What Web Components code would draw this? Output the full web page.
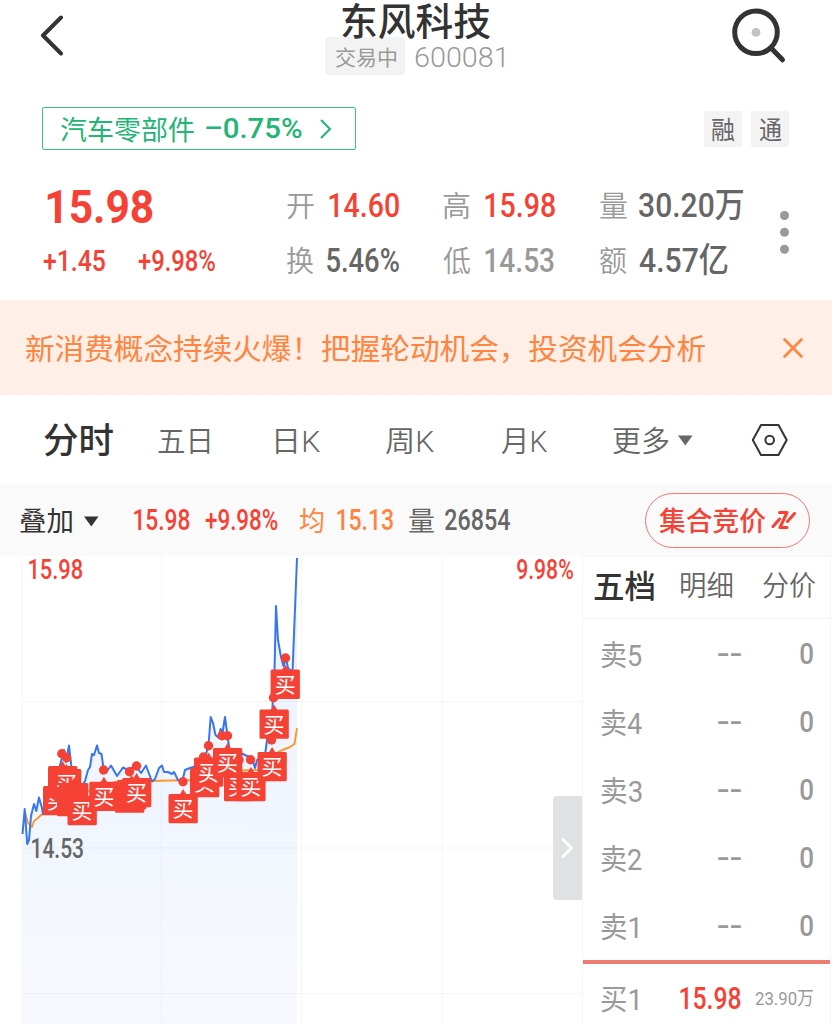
<!DOCTYPE html>
<html lang="zh-CN">
<head>
<meta charset="utf-8">
<title>东风科技 600081</title>
<style>
  body {
    margin: 0;
    background: #fff;
    overflow: hidden;
  }
</style>
</head>
<body>
<stock-page></stock-page>

<script>
const FONT = 'Roboto, "Noto Sans CJK SC", sans-serif';
const pen = document.createElement("canvas").getContext("2d");

// Text squeezed or stretched so its ink fills exactly `w` pixels
class FitText extends HTMLElement {
  constructor() {
    super();
    this.attachShadow({ mode: "open" });
    this.shadowRoot.innerHTML = `
      <style>
        :host {
          display: block;
          flex: none;
        }

        span {
          display: block;
          width: max-content;
          white-space: pre;
          transform-origin: 0 50%;
        }
      </style>
      <span><slot></slot></span>
    `;
  }

  connectedCallback() {
    const text = this.textContent;
    const w = Number(this.getAttribute("w"));
    const size = Number(this.getAttribute("size") || 28);
    const weight = this.getAttribute("weight") || "400";
    pen.font = `${weight} ${size}px ${FONT}`;
    const m = pen.measureText(text);
    const ink = m.actualBoundingBoxLeft + m.actualBoundingBoxRight;
    // Han glyphs sit a little high next to the digits
    const drop = text.charCodeAt(0) > 0x2e80 ? 1.5 : 0;

    this.style.width = `${w}px`;
    this.style.font = `${weight} ${size}px/${Math.round(size * 1.2)}px ${FONT}`;
    this.style.height = `${Math.round(size * 1.2)}px`;
    this.shadowRoot.querySelector("span").style.transform =
      `translateY(${drop}px) scaleX(${w / ink}) translateX(${m.actualBoundingBoxLeft}px)`;
  }
}

class StockHeader extends HTMLElement {
  constructor() {
    super();
    this.attachShadow({ mode: "open" });
    this.shadowRoot.innerHTML = `
      <style>
        :host {
          display: flex;
          justify-content: space-between;
          align-items: flex-start;
          height: 107px;
          box-sizing: border-box;
          padding: 0 45px 0 40px;
          color: #333;
        }

        .back {
          margin-top: 14px;
        }

        .search {
          margin-top: 8px;
        }

        .middle {
          display: flex;
          flex-direction: column;
          align-items: center;
          padding-left: 32px;
        }

        .middle > fit-text {
          margin: -3px 0 0 3px;
        }

        .code {
          display: flex;
          align-items: center;
          gap: 10px;
          margin-top: -6px;
          color: #999;
        }

        .code > fit-text {
          margin-top: 3px;
        }

        .badge {
          display: flex;
          align-items: center;
          justify-content: center;
          width: 80px;
          height: 38px;
          border-radius: 4px;
          background: #f3f3f3;
        }
      </style>
      <svg class="back" width="26" height="42" fill="none" stroke="currentColor" stroke-width="4" stroke-linecap="round" stroke-linejoin="round">
        <path d="M21 3.5 3 21.5l18 18"/>
      </svg>
      <div class="middle">
        <fit-text w="148" size="38" weight="500">东风科技</fit-text>
        <div class="code">
          <div class="badge"><fit-text w="61" size="21">交易中</fit-text></div>
          <fit-text w="89" size="28" weight="300">600081</fit-text>
        </div>
      </div>
      <svg class="search" width="56" height="56" fill="none" stroke="currentColor" stroke-width="5" stroke-linecap="round">
        <circle cx="25" cy="24.3" r="21.3"/>
        <path d="m41 41 10.5 10.8"/>
        <circle cx="25" cy="24.3" r="4.4" fill="#c2c2c2" stroke="none"/>
      </svg>
    `;
  }
}

class SectorRow extends HTMLElement {
  constructor() {
    super();
    this.attachShadow({ mode: "open" });
    this.shadowRoot.innerHTML = `
      <style>
        :host {
          display: flex;
          justify-content: space-between;
          align-items: center;
          height: 43px;
          padding: 0 43px 0 42px;
        }

        .sector {
          display: flex;
          align-items: center;
          box-sizing: border-box;
          width: 314px;
          height: 43px;
          padding-left: 17px;
          border: 1.5px solid #3ac187;
          border-radius: 2px;
          color: #22b573;
        }

        .change {
          margin: 1px 0 0 12px;
        }

        svg {
          margin-left: 17px;
        }

        .tags {
          display: flex;
          gap: 9px;
        }

        .tag {
          display: flex;
          align-items: center;
          justify-content: center;
          width: 38px;
          height: 36px;
          border-radius: 2px;
          background: #f3f3f3;
          color: #666;
        }
      </style>
      <div class="sector">
        <fit-text w="134" size="27">汽车零部件</fit-text>
        <fit-text class="change" w="96" size="28" weight="500">–0.75%</fit-text>
        <svg width="14" height="22" fill="none" stroke="currentColor" stroke-width="2">
          <path d="m2 2 9 9-9 9"/>
        </svg>
      </div>
      <div class="tags">
        <div class="tag"><fit-text w="23" size="25">融</fit-text></div>
        <div class="tag"><fit-text w="23" size="25">通</fit-text></div>
      </div>
    `;
  }
}

class QuoteSummary extends HTMLElement {
  constructor() {
    super();
    this.attachShadow({ mode: "open" });
    this.shadowRoot.innerHTML = `
      <style>
        :host {
          display: flex;
          height: 150px;
          box-sizing: border-box;
          padding: 28px 0 0 43px;
          color: #666;
        }

        .grid {
          display: grid;
          grid-template-columns: 244px 156px 157px 178px;
          grid-template-rows: 55px 55px;
          align-items: center;
        }

        .cell {
          display: flex;
          align-items: center;
        }

        .label, .low {
          color: #999;
        }

        .up {
          color: #f64135;
        }

        .price {
          margin: 3px 0 0 4px;
        }

        .diff {
          gap: 33px;
        }

        .more {
          margin-top: 31px;
        }
      </style>
      <div class="grid">
        <div class="cell up"><fit-text class="price" w="106" size="46" weight="700">15.98</fit-text></div>
        ${this.cell("开", "14.60", 15, 70, "up")}
        ${this.cell("高", "15.98", 15, 70, "up")}
        ${this.cell("量", "30.20万", 12, 104)}
        <div class="cell up diff">
          <fit-text w="62" size="30" weight="500">+1.45</fit-text>
          <fit-text w="77" size="30" weight="500">+9.98%</fit-text>
        </div>
        ${this.cell("换", "5.46%", 13, 72)}
        ${this.cell("低", "14.53", 15, 69, "low")}
        ${this.cell("额", "4.57亿", 12, 89)}
      </div>
      <svg class="more" width="12" height="48" fill="#999">
        <circle cx="6.5" cy="6.5" r="4.5"/>
        <circle cx="6.5" cy="23.3" r="4.5"/>
        <circle cx="6.5" cy="40.2" r="4.5"/>
      </svg>
    `;
  }

  cell(label, value, gap, w, tone = "") {
    return `
      <div class="cell ${tone}" style="gap: ${gap}px">
        <fit-text class="label" w="27" size="29" weight="350">${label}</fit-text>
        <fit-text w="${w}" size="34" weight="500">${value}</fit-text>
      </div>
    `;
  }
}

class NoticeBanner extends HTMLElement {
  constructor() {
    super();
    this.attachShadow({ mode: "open" });
    this.shadowRoot.innerHTML = `
      <style>
        :host {
          display: flex;
          align-items: center;
          justify-content: space-between;
          height: 95px;
          padding: 1px 28px 0 26px;
          box-sizing: border-box;
          background: #ffefe7;
          color: #ff8440;
        }
      </style>
      <fit-text w="679" size="29">新消费概念持续火爆！把握轮动机会，投资机会分析</fit-text>
      <svg width="22" height="22" fill="none" stroke="currentColor" stroke-width="2.6" stroke-linecap="round">
        <path d="m2.5 2.5 17 17m0-17-17 17"/>
      </svg>
    `;
  }
}

class PeriodTabs extends HTMLElement {
  constructor() {
    super();
    this.attachShadow({ mode: "open" });
    this.shadowRoot.innerHTML = `
      <style>
        :host {
          display: flex;
          align-items: center;
          justify-content: space-between;
          height: 89px;
          padding: 1px 44px 0 44px;
          box-sizing: border-box;
          color: #666;
        }

        .tabs, .more {
          display: flex;
          align-items: center;
        }

        .on, svg.gear {
          color: #333;
        }

        .more {
          gap: 9px;
        }
      </style>
      <div class="tabs">
        <fit-text class="on" w="69" size="35" weight="500">分时</fit-text>
        <fit-text style="margin-left: 45px" w="52" size="29" weight="350">五日</fit-text>
        <fit-text style="margin-left: 66px" w="44" size="29" weight="350">日K</fit-text>
        <fit-text style="margin-left: 66px" w="48" size="29" weight="350">周K</fit-text>
        <fit-text style="margin-left: 67px" w="46" size="29" weight="350">月K</fit-text>
        <div class="more" style="margin-left: 66px">
          <fit-text w="56" size="29" weight="350">更多</fit-text>
          <svg width="15" height="11" fill="currentColor"><path d="M0 .5h14.5L7.3 10.5z"/></svg>
        </div>
      </div>
      <svg class="gear" width="37" height="33" fill="none" stroke="currentColor" stroke-width="2" stroke-linejoin="round">
        <path d="M10 1h17.5l8.2 15-8.2 15H10L1.8 16z"/>
        <circle cx="18.7" cy="16" r="4.3"/>
      </svg>
    `;
  }
}

class IndexBar extends HTMLElement {
  constructor() {
    super();
    this.attachShadow({ mode: "open" });
    this.shadowRoot.innerHTML = `
      <style>
        :host {
          display: flex;
          align-items: center;
          height: 72px;
          box-sizing: border-box;
          padding: 0 22px 0 20px;
          background: #fafafa;
          color: #666;
        }

        .overlay {
          color: #333;
        }

        svg.overlay {
          margin: 3px 0 0 12px;
        }

        .up {
          color: #f64135;
        }

        .avg {
          color: #ff8440;
        }

        .auction {
          display: flex;
          align-items: center;
          gap: 5px;
          box-sizing: border-box;
          width: 165px;
          height: 55px;
          margin-left: auto;
          padding-left: 13px;
          border: 1.3px solid #f8776e;
          border-radius: 28px;
          color: #f64135;
        }
      </style>
      <fit-text class="overlay" w="52" size="27">叠加</fit-text>
      <svg class="overlay" width="15" height="11" fill="currentColor"><path d="M0 .5h14.5L7.3 10.5z"/></svg>
      <fit-text class="up" style="margin-left: 35px" w="56" size="29" weight="500">15.98</fit-text>
      <fit-text class="up" style="margin-left: 15px" w="73" size="29" weight="500">+9.98%</fit-text>
      <fit-text class="avg" style="margin-left: 21px" w="25" size="27">均</fit-text>
      <fit-text class="avg" style="margin-left: 13px" w="56" size="29" weight="500">15.13</fit-text>
      <fit-text style="margin-left: 16px" w="25" size="27">量</fit-text>
      <fit-text style="margin-left: 11px" w="65" size="29" weight="500">26854</fit-text>
      <div class="auction">
        <fit-text w="107" size="27" weight="500">集合竞价</fit-text>
        <svg width="26" height="20" fill="none" stroke="currentColor" stroke-width="3" stroke-linecap="round" stroke-linejoin="round">
          <path d="M2 16.5 8.5 9M8.500 2.500H16L9 17.500h7M23.500 3.500 16.500 11.500"/>
        </svg>
      </div>
    `;
  }
}

const PRICE = [
  [22.5, 834], [24.7, 809], [27.2, 844], [29, 840], [31, 816], [34, 804], [36.3, 811], [39, 797.5],
  [42, 808], [43, 814], [47, 795], [55, 785], [60, 765], [64, 750], [66, 762], [69, 745.5],
  [72, 772], [80, 790], [85, 781], [88, 770], [90, 767], [92, 754], [94, 755], [97, 745.5],
  [99, 753], [101.5, 754], [103.5, 768], [107, 771], [111, 765.5], [117, 776], [123, 767.5], [128, 770],
  [136, 766], [141, 773], [146, 765.5], [152, 781.5], [155, 779], [159, 768], [162, 765.5], [164, 772],
  [168, 772], [172, 774], [174, 772], [178, 780], [182, 782], [185, 770], [190, 768], [200, 765],
  [205, 758], [208.5, 745], [210.7, 717], [213, 723], [215.5, 735], [219, 738], [220.5, 729], [222.5, 733],
  [225, 717], [227.5, 736], [231, 760], [238, 764], [242, 753.5], [246, 755.5], [252, 758], [255, 768],
  [257, 760], [265, 755], [267, 740], [272, 715], [274.5, 670], [276, 606], [278, 640], [281, 657],
  [283.5, 666], [286, 658], [288, 668], [292.5, 672], [297, 558]
];

const AVERAGE = [
  [25, 812], [28, 823], [32, 827], [34, 821], [38, 818], [41, 815], [48, 813], [70, 802],
  [95, 787], [118, 781.5], [152, 781], [190, 780], [215, 775], [240, 770.5], [258, 770], [270, 757],
  [280, 751], [290, 747], [294.5, 744], [297, 728]
];

const DOTS = [
  [61.8, 753.8], [66.6, 757.8], [103.6, 770], [129.5, 771.8], [136.5, 766], [183, 781.8],
  [203.5, 757], [208.5, 745.8], [222, 735.8], [227.5, 735.8], [239, 760], [250.5, 759.8],
  [271.5, 740], [273.5, 697.8], [285.5, 658]
];

// Top left corner of every buy flag, back to front; the third item hides the label
const FLAGS = [
  [43, 786], [48, 766, true], [52, 769], [59, 783, true], [57, 787, true],
  [67.5, 796], [115, 783.5], [117, 780, true], [89.3, 781.8], [122, 778], [168.5, 794],
  [190, 768], [194, 757.5], [224, 772], [236.3, 772], [213, 748], [257.5, 752],
  [259.5, 709.5], [270.6, 669.6]
];

class MinuteChart extends HTMLElement {
  constructor() {
    super();
    this.attachShadow({ mode: "open" });
    const price = PRICE.map((p) => p.join()).join(" ");
    const average = AVERAGE.map((p) => p.join()).join(" ");

    this.shadowRoot.innerHTML = `
      <style>
        :host {
          display: block;
          position: relative;
          width: 582px;
          height: 468px;
        }

        svg {
          display: block;
        }

        .top {
          position: absolute;
          inset: -2px 9px auto 29px;
          display: flex;
          justify-content: space-between;
          color: #f64135;
        }

        .open {
          position: absolute;
          left: 32px;
          top: 277px;
          color: #666;
        }

        .fold {
          position: absolute;
          right: 0;
          top: 240px;
          width: 29.5px;
          height: 104px;
          display: flex;
          align-items: center;
          justify-content: center;
          border-radius: 4px 0 0 4px;
          background: #e0e1e3;
        }
      </style>
      <svg width="582" height="468" viewBox="0 556 582 468">
        <defs>
          <linearGradient id="fade" x1="0" y1="556" x2="0" y2="1024" gradientUnits="userSpaceOnUse">
            <stop offset="0" stop-color="#eaf1fd"/>
            <stop offset="1" stop-color="#f7f9fe"/>
          </linearGradient>
        </defs>
        <polygon points="22.5,1024 ${price} 297,1024" fill="url(#fade)"/>
        <path d="M22 556v468M161.5 556v468M301.5 556v468M442.5 556v468M22 701.5h560M22 848h560M22 993.5h560" stroke="#888" stroke-opacity=".08"/>
        <polyline points="${average}" fill="none" stroke="#fb9a2c" stroke-width="1.9" stroke-linejoin="round"/>
        <polyline points="${price}" fill="none" stroke="#3776ee" stroke-width="2" stroke-linejoin="round"/>
        ${DOTS.map(([x, y]) => `<circle cx="${x}" cy="${y}" r="4.7" fill="#f64135"/>`).join("")}
        ${FLAGS.map((f) => this.flag(...f)).join("")}
      </svg>
      <div class="top">
        <fit-text w="53" size="27" weight="500">15.98</fit-text>
        <fit-text w="56" size="27" weight="500">9.98%</fit-text>
      </div>
      <fit-text class="open" w="51" size="27" weight="500">14.53</fit-text>
      <div class="fold">
        <svg width="14" height="22" fill="none" stroke="#fff" stroke-width="3" stroke-linecap="round">
          <path d="m3 2.5 8.5 8.5L3 19.5"/>
        </svg>
      </div>
    `;
  }

  flag(x, y, plain) {
    const label = plain ? "" : `<text x="14.6" y="22.4" text-anchor="middle" font-family='"Noto Sans CJK SC", sans-serif' font-size="21" fill="#fff">买</text>`;
    return `
      <g transform="translate(${x} ${y})">
        <path d="M11 1l3.6-6L18.2 1z" fill="#f64135"/>
        <rect width="29.3" height="29.3" rx="1.5" fill="#f64135"/>
        ${label}
      </g>
    `;
  }
}

class OrderBook extends HTMLElement {
  constructor() {
    super();
    this.attachShadow({ mode: "open" });
    this.shadowRoot.innerHTML = `
      <style>
        :host {
          display: block;
          box-sizing: border-box;
          width: 249px;
          height: 468px;
          border: solid #f5f5f5;
          border-width: 1px 1px 0 1px;
          color: #999;
        }

        .tabs {
          display: flex;
          align-items: center;
          height: 62px;
          box-sizing: border-box;
          padding: 0 0 6px 11px;
          border-bottom: 1px solid #f3f3f3;
          color: #666;
        }

        .on {
          color: #333;
        }

        .row {
          display: flex;
          align-items: center;
          height: 68px;
          padding: 0 17px 0 18px;
        }

        .sells {
          height: 345px;
          box-sizing: border-box;
          padding-top: 1px;
          border-bottom: 4px solid #ec7b72;
        }

        .up {
          color: #f64135;
        }
      </style>
      <div class="tabs">
        <fit-text class="on" w="60" size="32" weight="500">五档</fit-text>
        <fit-text style="margin-left: 27px" w="51" size="28" weight="350">明细</fit-text>
        <fit-text style="margin-left: 31px" w="53" size="28" weight="350">分价</fit-text>
      </div>
      <div class="sells">
        ${[5, 4, 3, 2, 1].map((n) => `
          <div class="row">
            <fit-text w="${n === 1 ? 37 : 41}" size="29">卖${n}</fit-text>
            <fit-text style="margin-left: ${n === 1 ? 80 : 76}px" w="23" size="30" weight="500">--</fit-text>
            <fit-text style="margin-left: auto" w="13" size="30" weight="500">0</fit-text>
          </div>
        `).join("")}
      </div>
      <div class="row">
        <fit-text w="37" size="29">买1</fit-text>
        <fit-text class="up" style="margin-left: 42px" w="61" size="31" weight="500">15.98</fit-text>
        <fit-text style="margin-left: auto" w="58" size="19">23.90万</fit-text>
      </div>
    `;
  }
}

class StockPage extends HTMLElement {
  constructor() {
    super();
    this.attachShadow({ mode: "open" });
    this.shadowRoot.innerHTML = `
      <style>
        :host {
          display: block;
          width: 832px;
          height: 1024px;
          overflow: hidden;
          background: #fff;
        }

        .board {
          display: flex;
        }
      </style>
      <stock-header></stock-header>
      <sector-row></sector-row>
      <quote-summary></quote-summary>
      <notice-banner></notice-banner>
      <period-tabs></period-tabs>
      <index-bar></index-bar>
      <div class="board">
        <minute-chart></minute-chart>
        <order-book></order-book>
      </div>
    `;
  }
}

customElements.define("fit-text", FitText);
customElements.define("stock-header", StockHeader);
customElements.define("sector-row", SectorRow);
customElements.define("quote-summary", QuoteSummary);
customElements.define("notice-banner", NoticeBanner);
customElements.define("period-tabs", PeriodTabs);
customElements.define("index-bar", IndexBar);
customElements.define("minute-chart", MinuteChart);
customElements.define("order-book", OrderBook);
customElements.define("stock-page", StockPage);
</script>
</body>
</html>
